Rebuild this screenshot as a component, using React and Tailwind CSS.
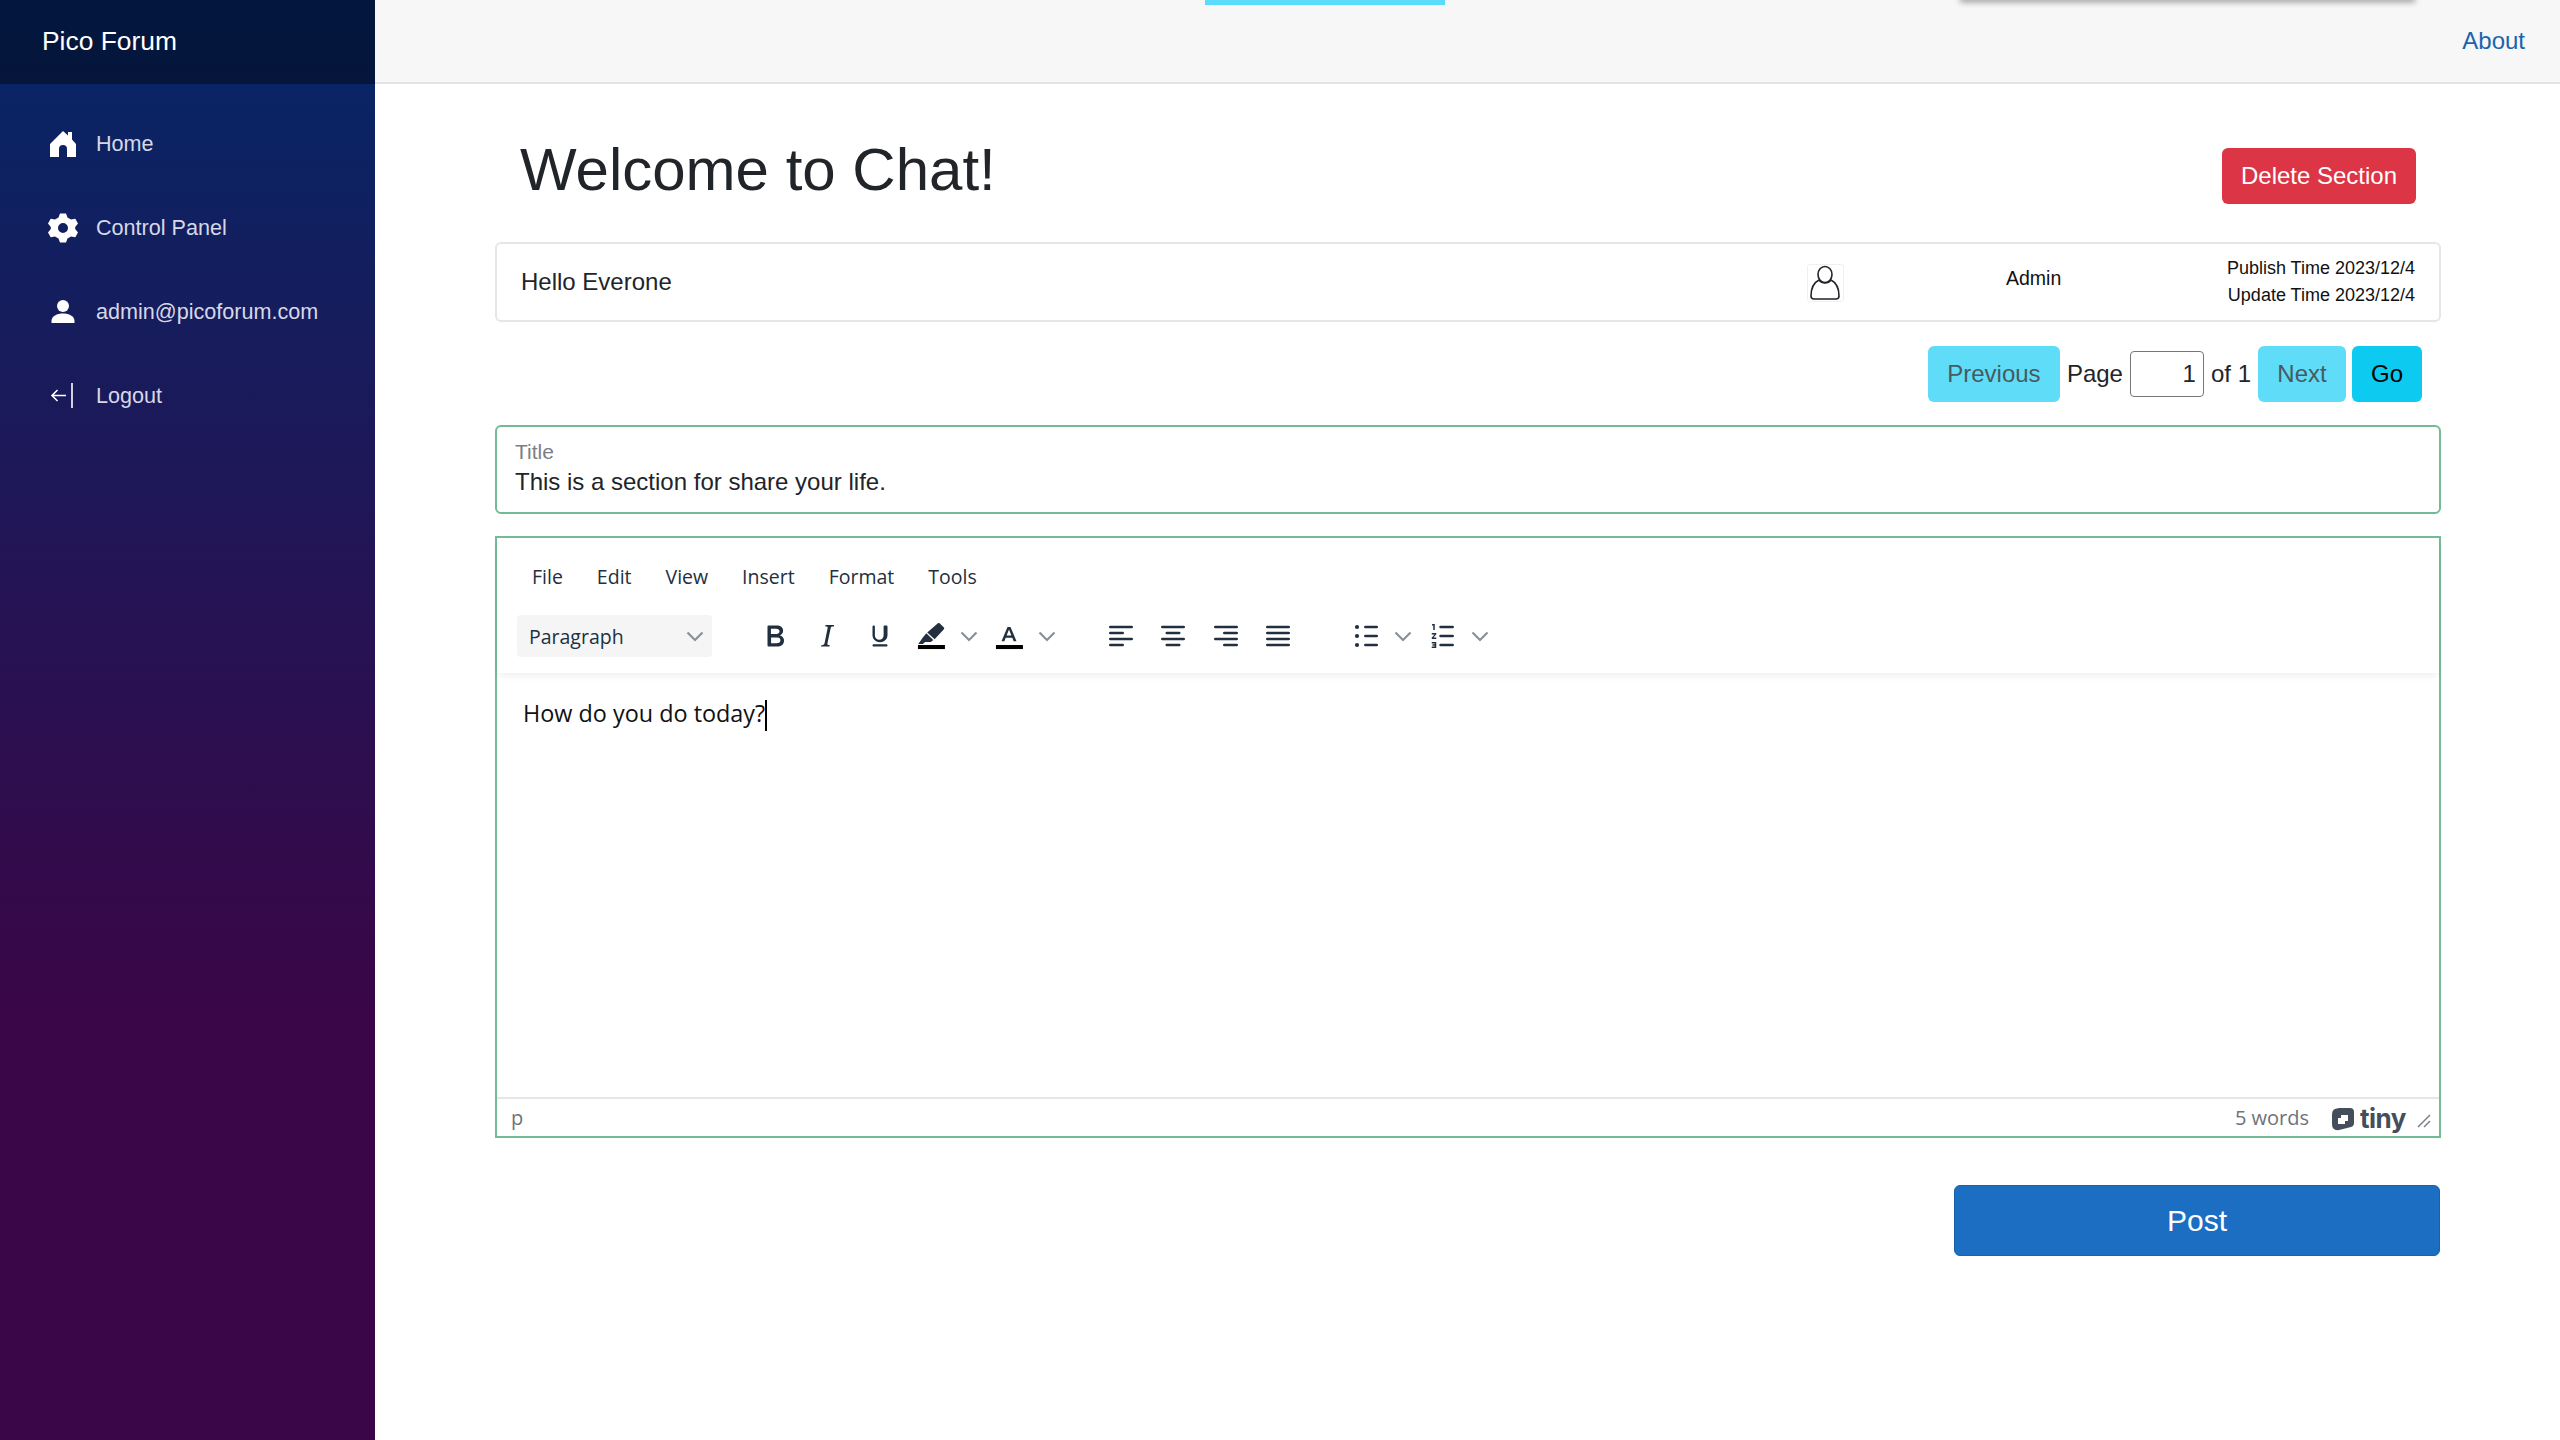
const navItems = [
  { label: 'Home', icon: 'home' },
  { label: 'Control Panel', icon: 'gear' },
  { label: 'admin@picoforum.com', icon: 'person' },
  { label: 'Logout', icon: 'logout' },
];

function NavIcon({ name }) {
  if (name === 'home') {
    return (
      <svg viewBox="0 0 30 30" className="w-[30px] h-[30px] text-white" fill="currentColor">
        <path d="M15 2 L20 6.5 V3 H24 V10.5 L28 15 V28 H19 V20 A4 4 0 0 0 11 20 V28 H2 V15 Z" />
      </svg>
    );
  }
  if (name === 'gear') {
    return (
      <svg viewBox="0 0 30 30" className="w-[30px] h-[30px] text-white" fill="currentColor">
        <path
          fillRule="evenodd"
          d="M12 0.5 H18 L19.5 4.5 L23 6.5 L27.3 5.8 L30 10.6 L27.2 14 V16 L30 19.4 L27.3 24.2 L23 23.5 L19.5 25.5 L18 29.5 H12 L10.5 25.5 L7 23.5 L2.7 24.2 L0 19.4 L2.8 16 V14 L0 10.6 L2.7 5.8 L7 6.5 L10.5 4.5 Z M15 10 A5 5 0 1 0 15 20 A5 5 0 1 0 15 10 Z"
        />
      </svg>
    );
  }
  if (name === 'person') {
    return (
      <svg viewBox="0 0 30 30" className="w-[30px] h-[30px] text-white" fill="currentColor">
        <circle cx="15" cy="9" r="6" />
        <path d="M3.5 26 V24 C3.5 19 9 16.5 15 16.5 C21 16.5 26.5 19 26.5 24 V26 Z" />
      </svg>
    );
  }
  return (
    <svg viewBox="0 0 30 30" className="w-[30px] h-[30px] text-white" fill="none" stroke="currentColor" strokeWidth="1.6">
      <path d="M24 2 V27" />
      <path d="M18 14.5 H4 M9.5 9 L4 14.5 L9.5 20" />
    </svg>
  );
}

function Sidebar() {
  return (
    <aside className="w-[375px] shrink-0 bg-[linear-gradient(180deg,#052767_0%,#3a0647_70%)] flex flex-col">
      <div className="h-[84px] bg-black/40 flex items-center pl-[42px] text-[26.4px] text-white">Pico Forum</div>
      <nav className="pt-[18px]">
        {navItems.map((item) => (
          <div key={item.label} className="h-[84px] flex items-center pl-[48px] text-[#d7d7e6] text-[21.6px]">
            <NavIcon name={item.icon} />
            <span className="ml-[18px]">{item.label}</span>
          </div>
        ))}
      </nav>
    </aside>
  );
}

function TopBar() {
  return (
    <header className="h-[84px] bg-[#f7f7f7] border-b-2 border-[#e2e2e2] relative flex items-center justify-end pr-[35px]">
      <div className="absolute top-0 left-[830px] w-[240px] h-[5px] bg-[#5cdcfb]" />
      <div className="absolute top-[-6px] left-[1585px] w-[455px] h-[6px] shadow-[0_2px_6px_rgba(0,0,0,0.4)]" />
      <a className="text-[24px] text-[#1a64ad]">About</a>
    </header>
  );
}

function PostCard() {
  return (
    <div className="h-[80px] border-2 border-[#e6e6e6] rounded-md flex items-center">
      <div className="flex-1 pl-[24px] text-[24px] text-[#212529]">Hello Everone</div>
      <div className="w-[35px] h-[36px] mt-[2px] rounded-[2px] outline outline-[#f0f0f0]">
        <svg viewBox="0 0 34 36" className="w-[34px] h-[36px]" fill="none" stroke="#212529" strokeWidth="1.6">
          <ellipse cx="17" cy="9.5" rx="7" ry="8" />
          <path d="M11 15 C5 18 3 24 3 31 C3 33 4 34 6 34 H28 C30 34 31 33 31 31 C31 24 29 18 23 15 C20 19 14 19 11 15 Z" />
        </svg>
      </div>
      <div className="w-[366px] pl-[163px] text-[19.5px] text-[#111] -mt-[6px] whitespace-nowrap">Admin</div>
      <div className="w-[230px] pr-[24px] text-right text-[18px] leading-[27px] text-[#111]">
        <div>Publish Time 2023/12/4</div>
        <div>Update Time 2023/12/4</div>
      </div>
    </div>
  );
}

function Pagination() {
  return (
    <div className="mt-[24px] h-[56px] flex items-center justify-end pr-[19px] text-[24px] text-[#212529]">
      <button className="h-[56px] w-[132px] rounded-md bg-[#5fdcf7] text-[#485a60]">Previous</button>
      <span className="ml-[7px]">Page</span>
      <div className="ml-[7px] w-[74px] h-[46px] border border-[#777] rounded-[4px] flex items-center justify-end pr-[7px]">1</div>
      <span className="ml-[7px]">of 1</span>
      <button className="ml-[7px] h-[56px] w-[88px] rounded-md bg-[#5fdcf7] text-[#485a60]">Next</button>
      <button className="ml-[6px] h-[56px] w-[70px] rounded-md bg-[#0dcaf0] text-black">Go</button>
    </div>
  );
}

function TitleField() {
  return (
    <div className="mt-[23px] h-[89px] border-2 border-[#72bb94] rounded-md pl-[18px] pt-[12px]">
      <div className="text-[21px] leading-[26px] text-[#7a7f84]">Title</div>
      <div className="text-[24px] leading-[34px] text-[#212529]">This is a section for share your life.</div>
    </div>
  );
}

function ToolIcon({ children }) {
  return (
    <svg viewBox="0 0 24 24" className="w-[36px] h-[36px]" fill="#222f3e">
      {children}
    </svg>
  );
}

function Lines({ widths, align }) {
  return (
    <ToolIcon>
      {widths.map((w, i) => {
        const x = align === 'left' ? 4 : align === 'right' ? 20 - w : 12 - w / 2;
        return <rect key={i} x={x} y={5.1 + i * 4} width={w} height={1.8} rx={0.9} />;
      })}
    </ToolIcon>
  );
}

function Chevron({ className = '' }) {
  return (
    <svg viewBox="0 0 22 22" className={`w-[22px] h-[22px] ${className}`} fill="none" stroke="#8a9096" strokeWidth="2.2">
      <path d="M3.5 7.5 L11 15 L18.5 7.5" />
    </svg>
  );
}

function Editor() {
  return (
    <div className="mt-[22px] h-[602px] border-2 border-[#72bb94] flex flex-col font-['Open_Sans',sans-serif]">
      <div className="h-[135px] shrink-0 shadow-[0_4px_8px_-2px_rgba(0,0,0,0.08)] relative">
        <div className="flex pl-[35px] pt-[24px] h-[77px] text-[19.5px] text-[#222f3e] gap-[34px]">
          <span>File</span>
          <span>Edit</span>
          <span>View</span>
          <span>Insert</span>
          <span>Format</span>
          <span>Tools</span>
        </div>
        <div className="flex items-center h-[42px] pl-[20px]">
          <div className="w-[195px] h-[42px] bg-[#f5f5f5] rounded-[4px] flex items-center justify-between pl-[12px] pr-[6px] text-[19.5px] text-[#222f3e]">
            <span className="mt-[2px]">Paragraph</span>
            <Chevron />
          </div>
          <div className="ml-[45px] flex items-center">
            <ToolIcon>
              <path d="M7.8 19c-.3 0-.5 0-.6-.2l-.2-.5V5.7c0-.2 0-.4.2-.5l.6-.2h5c1.5 0 2.7.3 3.5 1 .7.6 1.1 1.4 1.1 2.5a3 3 0 0 1-.6 1.9c-.4.6-1 1-1.6 1.2.4.1.9.3 1.3.6s.8.7 1 1.2c.4.4.5 1 .5 1.6 0 1.3-.4 2.3-1.3 3-.8.7-2.1 1-3.8 1H7.8zm5-8.3c.6 0 1.2-.1 1.6-.5.4-.3.6-.7.6-1.3 0-1.1-.8-1.7-2.3-1.7H9.3v3.5h3.4zm.5 6c.7 0 1.3-.1 1.7-.4.4-.4.6-.9.6-1.5s-.2-1-.7-1.4c-.4-.3-1-.4-2-.4H9.4v3.8h4z" />
            </ToolIcon>
            <span className="ml-[16px]">
              <ToolIcon>
                <path d="m16.7 4.7-.1.9h-.3c-.6 0-1 0-1.4.3-.3.3-.4.6-.5 1.1l-2.1 9.8v.6c0 .5.4.8 1.4.8h.2l-.2.8H8l.2-.8h.2c1.1 0 1.8-.5 2-1.5l2-9.8.1-.5c0-.6-.4-.8-1.4-.8h-.3l.2-.9h5.8Z" />
              </ToolIcon>
            </span>
            <span className="ml-[17px]">
              <ToolIcon>
                <path d="M16.2 5c.5 0 .8.3.8.8v5.9a4.2 4.2 0 0 1-1.3 3 5.2 5.2 0 0 1-7.4 0 4.2 4.2 0 0 1-1.3-3V5.8c0-.5.3-.8.8-.8s.8.3.8.8v5.9c0 .8.3 1.4.8 1.9.6.6 1.3.9 2.1.9s1.5-.3 2.1-.9c.5-.5.8-1.1.8-1.9V5.8c0-.5.3-.8.8-.8Z" />
                <rect x="7" y="17.5" width="10" height="1.5" rx="0.7" />
              </ToolIcon>
            </span>
            <span className="ml-[15px]">
              <ToolIcon>
                <path d="M17.7 3.5 20.6 6.4c.3.3.3.8 0 1.1l-6.2 6.6-4.9-4.4 7.1-6.2c.3-.3.8-.3 1.1 0Z M8.9 10.2l4.6 4.4-1.6 1.4H8.1L6.5 17.3H3.5l3.2-4.5 2.2-2.6Z" />
                <rect x="3.3" y="18" width="18" height="2.7" fill="#000" />
              </ToolIcon>
            </span>
            <Chevron className="ml-[9px]" />
            <span className="ml-[11px]">
              <ToolIcon>
                <path fillRule="evenodd" d="M11 6h2l4 9.5h-1.9l-.9-2.3H9.8L8.9 15.5H7L11 6Zm-.6 5.7h3.2L12 7.700l-1.600 4Z" />
                <rect x="3.3" y="18" width="18" height="2.7" fill="#000" />
              </ToolIcon>
            </span>
            <Chevron className="ml-[9px]" />
            <span className="ml-[45px]">
              <Lines widths={[16, 10, 16, 10]} align="left" />
            </span>
            <span className="ml-[16px]">
              <Lines widths={[16, 10, 16, 10]} align="center" />
            </span>
            <span className="ml-[17px]">
              <Lines widths={[16, 10, 16, 10]} align="right" />
            </span>
            <span className="ml-[16px]">
              <Lines widths={[16, 16, 16, 16]} align="left" />
            </span>
            <span className="ml-[52px]">
              <ToolIcon>
                <circle cx="6" cy="6" r="1.4" />
                <circle cx="6" cy="12" r="1.4" />
                <circle cx="6" cy="18" r="1.4" />
                <rect x="10.7" y="5.1" width="9.3" height="1.8" rx="0.9" />
                <rect x="10.7" y="11.1" width="9.3" height="1.8" rx="0.9" />
                <rect x="10.7" y="17.1" width="9.3" height="1.8" rx="0.9" />
              </ToolIcon>
            </span>
            <Chevron className="ml-[8px]" />
            <span className="ml-[11px]">
              <ToolIcon>
                <rect x="9.5" y="5.1" width="9.8" height="1.8" rx="0.9" />
                <rect x="9.5" y="11.1" width="9.8" height="1.8" rx="0.9" />
                <rect x="9.5" y="17.1" width="9.8" height="1.8" rx="0.9" />
                <path d="M5.5 4h1v4h-1V5h-.8V4h.8Zm-1 6h3v.9L5.7 13H7.5v1h-3v-.9L6.3 11H4.5v-1Zm0 6h3v4h-3v-1h2v-.5H5v-1h1.500V17h-2v-1Z" />
              </ToolIcon>
            </span>
            <Chevron className="ml-[8px]" />
          </div>
        </div>
      </div>
      <div className="flex-1 pl-[26px] pt-[22px] text-[23.4px] leading-[36px] text-[#111]">
        How do you do today?<span className="inline-block w-[2px] h-[31px] bg-black align-middle" />
      </div>
      <div className="h-[39px] border-t-2 border-[#e6e6e6] flex items-center pl-[14px] pr-[8px] text-[20px] text-[#6d737a]">
        <span className="flex-1">p</span>
        <span>5 words</span>
        <svg viewBox="0 0 24 24" className="ml-[22px] w-[24px] h-[24px] mt-[2px]" fill="#454e5b">
          <path
            fillRule="evenodd"
            d="M8 1 L19 1 Q23 1 23 5 V16 Q23 19 20 20 L8 23 Q1 24 1 17 V8 Q1 3 4 2 Z M10 8 V11 H7 V17 H14 V14 H17 V8 Z"
          />
        </svg>
        <span className="ml-[5px] mt-[2px] text-[26px] leading-none font-bold text-[#454e5b] font-['Inter',sans-serif] tracking-[-0.5px]">tiny</span>
        <svg viewBox="0 0 14 14" className="ml-[11px] w-[14px] h-[14px] mt-[7px]" stroke="#7b8288" strokeWidth="1.5" fill="none">
          <path d="M1 13 L13 1 M7 13 L13 7" />
        </svg>
      </div>
    </div>
  );
}

export default function App() {
  return (
    <div className="w-full min-h-[1440px] flex bg-white font-['Liberation_Sans',sans-serif]">
      <Sidebar />
      <main className="flex-1 flex flex-col">
        <TopBar />
        <div className="pl-[120px] pr-[119px]">
          <div className="h-[158px] flex justify-between pl-[25px] pr-[25px]">
            <h1 className="mt-[49px] text-[60px] leading-[74px] text-[#212529]">Welcome to Chat!</h1>
            <button className="mt-[64px] w-[194px] h-[56px] rounded-md bg-[#dc3545] text-white text-[24px]">Delete Section</button>
          </div>
          <PostCard />
          <Pagination />
          <TitleField />
          <Editor />
          <div className="mt-[47px] pr-[1px] flex justify-end">
            <button className="w-[486px] h-[71px] rounded-md bg-[#1b6ec2] border border-[#1861ac] text-white text-[30px]">Post</button>
          </div>
        </div>
      </main>
    </div>
  );
}
